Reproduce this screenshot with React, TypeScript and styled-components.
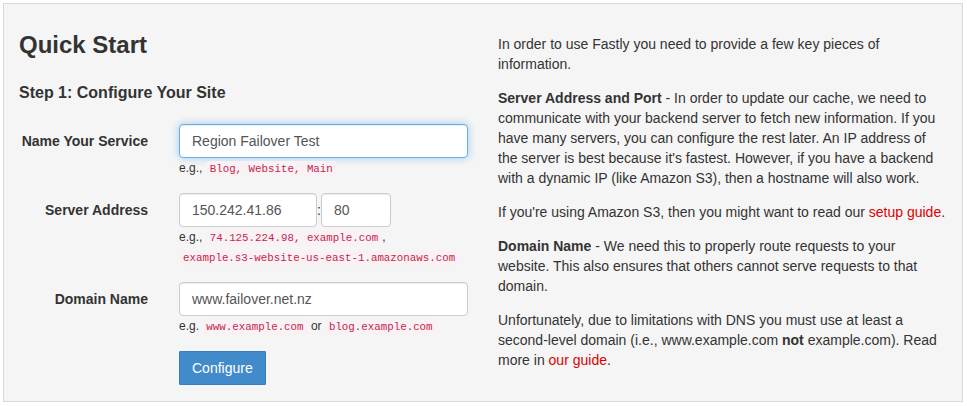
import React from "react";
import styled, { createGlobalStyle, css } from "styled-components";

const GlobalStyle = createGlobalStyle`
  html, body { margin: 0; padding: 0; background: #ffffff; }
  body {
    font-family: "Liberation Sans", Arial, sans-serif;
    font-size: 14px;
    line-height: 20px;
    color: #333333;
  }
  * { box-sizing: border-box; }
`;

const Panel = styled.div`
  margin: 3px;
  width: 960px;
  border: 1px solid #d9d9d9;
  background: #f5f5f5;
  padding: 30px 0 16px;
  display: grid;
  grid-template-columns: 1fr 1fr;
`;

const Column = styled.div`
  padding: 0 15px;
  min-width: 0;
`;

const Title = styled.h3`
  margin: 0;
  font-size: 24px;
  font-weight: bold;
  line-height: 22px;
  color: #333333;
`;

const StepTitle = styled.h4`
  margin: 27px 0 21px;
  font-size: 16px;
  font-weight: bold;
  line-height: 20px;
  color: #333333;
`;

const FormRow = styled.div`
  display: grid;
  grid-template-columns: 144px 1fr;
  column-gap: 31px;
  margin: 0 0 15px -15px;
`;

const Label = styled.label`
  text-align: right;
  font-weight: bold;
  font-size: 14px;
  line-height: 20px;
  padding-top: 7px;
  color: #333333;
`;

const Field = styled.div`
  min-width: 0;
`;

const Input = styled.input<{ $width?: number; $focused?: boolean }>`
  display: block;
  width: ${(p) => (p.$width ? `${p.$width}px` : "100%")};
  height: 34px;
  padding: 6px 12px;
  font-family: "Liberation Sans", Arial, sans-serif;
  font-size: 14px;
  line-height: 20px;
  color: #555555;
  background: #ffffff;
  border: 1px solid #cccccc;
  border-radius: 4px;
  box-shadow: inset 0 1px 1px rgba(0, 0, 0, 0.075);
  outline: none;
  ${(p) =>
    p.$focused &&
    css`
      border-color: #66afe9;
      box-shadow: inset 0 1px 1px rgba(0, 0, 0, 0.075),
        0 0 8px rgba(102, 175, 233, 0.6);
    `}
`;

const InlineGroup = styled.div`
  display: flex;
  align-items: center;
`;

const Colon = styled.span`
  font-size: 14px;
  color: #333333;
`;

const Help = styled.p`
  margin: 0;
  font-size: 12px;
  line-height: 20px;
  color: #333333;
`;

const Code = styled.code`
  font-family: "Liberation Mono", "Courier New", monospace;
  font-size: 90%;
  line-height: 1;
  padding: 2px 4px;
  color: #c7254e;
  background: #f9f2f4;
  border-radius: 4px;
  white-space: nowrap;
`;

const Button = styled.button`
  display: inline-block;
  height: 34px;
  padding: 6px 12px;
  font-family: "Liberation Sans", Arial, sans-serif;
  font-size: 14px;
  line-height: 20px;
  color: #ffffff;
  background: #428bca;
  border: 1px solid #357ebd;
  border-radius: 1px;
  cursor: pointer;
`;

const ButtonRow = styled.div`
  padding-left: 160px;
`;

const Para = styled.p`
  margin: 0 0 14px;
  font-size: 14px;
  line-height: 20px;
  color: #333333;
`;

const Link = styled.a`
  color: #dd0000;
  text-decoration: none;
`;

export default function App() {
  return (
    <>
      <GlobalStyle />
      <Panel>
        <Column>
          <Title>Quick Start</Title>
          <StepTitle>Step 1: Configure Your Site</StepTitle>

          <FormRow>
            <Label>Name Your Service</Label>
            <Field>
              <Input $focused defaultValue="Region Failover Test" />
              <Help>
                e.g., <Code>Blog, Website, Main</Code>
              </Help>
            </Field>
          </FormRow>

          <FormRow>
            <Label>Server Address</Label>
            <Field>
              <InlineGroup>
                <Input $width={138} defaultValue="150.242.41.86" />
                <Colon>:</Colon>
                <Input $width={70} defaultValue="80" />
              </InlineGroup>
              <Help>
                e.g., <Code>74.125.224.98, example.com</Code>,{" "}
                <Code>example.s3-website-us-east-1.amazonaws.com</Code>
              </Help>
            </Field>
          </FormRow>

          <FormRow>
            <Label>Domain Name</Label>
            <Field>
              <Input defaultValue="www.failover.net.nz" />
              <Help>
                e.g. <Code>www.example.com</Code> or <Code>blog.example.com</Code>
              </Help>
            </Field>
          </FormRow>

          <ButtonRow>
            <Button>Configure</Button>
          </ButtonRow>
        </Column>

        <Column>
          <Para>
            In order to use Fastly you need to provide a few key pieces of
            information.
          </Para>
          <Para>
            <strong>Server Address and Port</strong> - In order to update our
            cache, we need to communicate with your backend server to fetch new
            information. If you have many servers, you can configure the rest
            later. An IP address of the server is best because it's fastest.
            However, if you have a backend with a dynamic IP (like Amazon S3),
            then a hostname will also work.
          </Para>
          <Para>
            If you're using Amazon S3, then you might want to read our{" "}
            <Link href="#">setup guide</Link>.
          </Para>
          <Para>
            <strong>Domain Name</strong> - We need this to properly route
            requests to your website. This also ensures that others cannot
            serve requests to that domain.
          </Para>
          <Para>
            Unfortunately, due to limitations with DNS you must use at least a
            second-level domain (i.e., www.example.com <strong>not</strong>{" "}
            example.com). Read more in <Link href="#">our guide</Link>.
          </Para>
        </Column>
      </Panel>
    </>
  );
}
